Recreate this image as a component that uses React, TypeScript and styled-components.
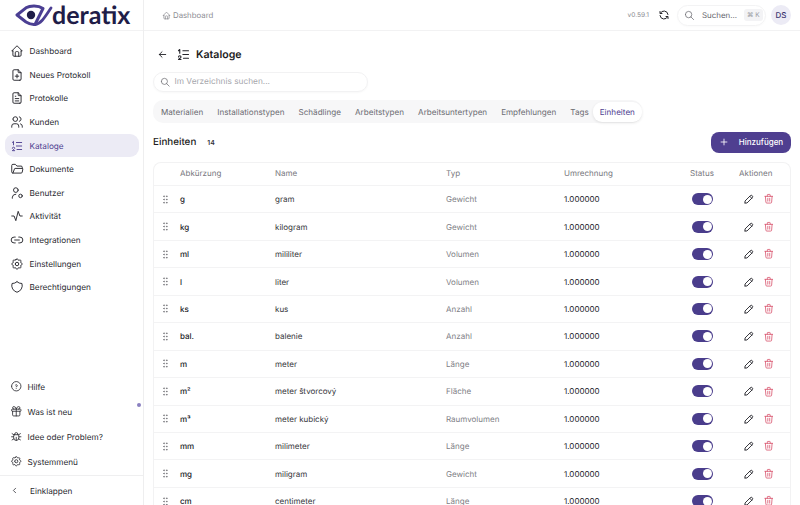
import React from "react";
import styled, { createGlobalStyle } from "styled-components";
import { Link2 } from "lucide-react";
import {
  TbHome, TbFilePlus, TbFileText, TbUsers, TbListNumbers, TbFolderOpen, TbActivity,
  TbSettings, TbShield, TbHelpCircle, TbGift, TbBug, TbChevronLeft, TbPencil, TbTrash,
  TbRefresh, TbSearch, TbArrowLeft, TbPlus, TbGripVertical,
} from "react-icons/tb";

const Global = createGlobalStyle`
  html, body { margin: 0; padding: 0; height: 505px; overflow: hidden; background: #fff; }
  * { box-sizing: border-box; }
  body { font-family: Inter, "Liberation Sans", sans-serif; color: #25252b; text-rendering: geometricPrecision; -webkit-font-smoothing: antialiased; }
`;

const Page = styled.div`display: flex; width: 800px; height: 505px; overflow: hidden;`;
const Sidebar = styled.aside`width: 144px; flex: none; border-right: 1px solid #eeeeef; display: flex; flex-direction: column; height: 505px;`;
const LogoBar = styled.div`height: 31px; display: flex; align-items: center; padding-left: 15px; border-bottom: 1px solid #f2f2f3;`;
const LogoText = styled.span`font-family: Lato, sans-serif; font-size: 25px; font-weight: 700; color: #1f1d48; margin-left: -1px; line-height: 31px;`;
const Nav = styled.nav`display: flex; flex-direction: column; padding: 8.5px 4px 0 5px; flex: 1;`;
const NavItem = styled.div<{ $active?: boolean }>`
  height: 23.6px; display: flex; align-items: center; gap: 5.5px; padding-left: 5px;
  border-radius: 9px; font-size: 8.2px; font-weight: 400;
  color: ${p => (p.$active ? "#4e4090" : "#2a2a30")};
  background: ${p => (p.$active ? "#ecebf5" : "transparent")};
  svg { width: 14px; height: 14px; flex: none; stroke-width: 1.6; color: ${p => (p.$active ? "#4e4090" : "#25252b")}; }
`;
const Lower = styled.div`position: relative; display: flex; flex-direction: column; padding: 0 4px 1px 5px;`;
const LowerItem = styled.div`
  height: 25px; display: flex; align-items: center; gap: 5.5px; padding-left: 4.5px; font-size: 8.2px; color: #2a2a30;
  svg { width: 12.5px; height: 12.5px; flex: none; stroke-width: 1.6; }
`;
const Dot = styled.span`position: absolute; right: 2px; top: 29px; width: 4px; height: 4px; border-radius: 50%; background: #8a80c0;`;
const Collapse = styled.div`
  height: 29px; margin-top: 1px; border-top: 1px solid #efeff0; display: flex; align-items: center; gap: 11px; padding-left: 10px; font-size: 8.2px; color: #2a2a30;
  margin-left: -5px; margin-right: -4px; padding-top: 1px;
  svg { width: 9px; height: 9px; stroke-width: 2; flex: none; }
`;

const Main = styled.main`flex: 1; min-width: 0; display: flex; flex-direction: column;`;
const TopBar = styled.header`height: 31px; flex: none; display: flex; align-items: center; padding: 0 9px 0 18px; border-bottom: 1px solid #f2f2f3;`;
const Crumb = styled.div`display: flex; align-items: center; gap: 2px; font-size: 7.8px; color: #8c8c92; flex: 1; svg { width: 9px; height: 9px; }`;
const Version = styled.span`font-size: 6.6px; color: #8c8c92; margin-right: 9px;`;
const SyncBtn = styled.span`display: flex; margin-right: 7px; svg { width: 12px; height: 12px; stroke-width: 2; color: #25252b; }`;
const GlobalSearch = styled.div`
  width: 89px; height: 21px; border-radius: 11px; border: 1px solid #f3f3f4; display: flex; align-items: center; padding-left: 6px; gap: 7px;
  font-size: 7.9px; color: #66666c; margin-right: 5px; box-shadow: 0 1px 2px rgba(0,0,0,.02); white-space: nowrap;
  svg { width: 11px; height: 11px; color: #66666c; stroke-width: 1.6; flex: none; }
`;
const Kbd = styled.span`background: #f3f3f5; border-radius: 3px; font-size: 6.5px; color: #9a9aa2; padding: 2px 3px; white-space: nowrap;`;
const Avatar = styled.div`width: 20px; height: 20px; border-radius: 50%; background: #ecebf5; color: #3c3670; font-size: 8px; font-weight: 500; display: flex; align-items: center; justify-content: center;`;

const Content = styled.div`flex: 1; padding: 0 9px 0 9px; min-height: 0;`;
const TitleRow = styled.div`display: flex; align-items: center; height: 20px; margin-top: 13px; padding-left: 4px; svg { flex: none; }`;
const BackIcon = styled(TbArrowLeft)`width: 11px; height: 11px; stroke-width: 2; color: #25252b; margin-right: 8px;`;
const ListIcon = styled(TbListNumbers)`width: 15px; height: 15px; stroke-width: 1.8; color: #25252b; margin-right: 5px;`;
const Title = styled.h1`margin: 0; font-size: 10.6px; font-weight: 600; color: #1c1c22;`;
const DirSearch = styled.div`
  width: 215px; height: 20px; margin-top: 8px; border-radius: 10px; border: 1px solid #f2f2f3; box-shadow: 0 1px 2px rgba(0,0,0,.03);
  display: flex; align-items: center; padding-left: 6px; gap: 4px; font-size: 8.3px; color: #a6a6ac;
  svg { width: 10.5px; height: 10.5px; color: #66666c; stroke-width: 1.6; }
`;
const TabBar = styled.div`display: inline-flex; align-items: center; margin-top: 8px; height: 23px; background: #f7f7f8; border-radius: 10px; padding-left: 1px; font-size: 8.1px;`;
const Tab = styled.div<{ $active?: boolean }>`
  height: 20px; display: flex; align-items: center; padding: 0 7px; white-space: nowrap; border-radius: 9px;
  margin-left: ${p => (p.$active ? "-3px" : "0")};
  color: ${p => (p.$active ? "#4e4090" : "#6c6c72")};
  background: ${p => (p.$active ? "#fff" : "transparent")};
  box-shadow: ${p => (p.$active ? "0 1px 3px rgba(0,0,0,.1)" : "none")};
`;
const SectionHead = styled.div`display: flex; align-items: center; height: 22px; margin-top: 8px;`;
const SectionTitle = styled.h2`margin: 0; font-size: 9.8px; font-weight: 500; color: #1c1c22;`;
const Count = styled.span`font-size: 6.8px; font-weight: 600; color: #33333a; margin-left: 11px; flex: 1;`;
const AddButton = styled.button`
  width: 80px; height: 21px; border: 0; border-radius: 8px; background: #4f3f90; color: #fff; font: 500 8px Inter, sans-serif;
  display: flex; align-items: center; justify-content: center; gap: 10px;
  svg { width: 10px; height: 10px; stroke-width: 2; }
`;
const Table = styled.div`margin-top: 9px; border: 1px solid #f2f2f3; border-bottom: 0; border-radius: 8px 8px 0 0; width: 638px;`;
const cols = "26px 95px 171px 118px 126px 49px 52px";
const HeadRow = styled.div`display: grid; grid-template-columns: ${cols}; height: 23px; padding-bottom: 2px; align-items: center; font-size: 8px; color: #77777d; border-bottom: 1px solid #f3f3f4;`;
const Row = styled.div`display: grid; grid-template-columns: ${cols}; height: 27.45px; align-items: center; font-size: 8px; color: #35353b; border-bottom: 1px solid #f3f3f4;`;
const Drag = styled.span`display: flex; padding-left: 6px; svg { width: 11px; height: 11px; color: #77777d; }`;
const Abbr = styled.span`color: #222228; font-weight: 500;`;
const Type = styled.span`color: #808086;`;
const Value = styled.span`color: #222228;`;
const Toggle = styled.span`display: flex; width: 21px; height: 12px; margin-left: 2px; border-radius: 6px; background: #4a3d8c; padding: 1.5px; justify-content: flex-end;`;
const Knob = styled.span`width: 9px; height: 9px; border-radius: 50%; background: #fff;`;
const Actions = styled.span`display: flex; align-items: center; gap: 8px; padding-left: 4px;`;
const Edit = styled(TbPencil)`width: 12px; height: 12px; stroke-width: 1.8; color: #25252b;`;
const Del = styled(TbTrash)`width: 11.5px; height: 11.5px; stroke-width: 1.7; color: #d9566f;`;

const UserDot = () => (
  <svg viewBox="0 0 24 24" fill="none" stroke="currentColor" strokeLinecap="round" strokeLinejoin="round">
    <circle cx="10" cy="7" r="4" />
    <path d="M4 21v-2a6 6 0 0 1 6-5" />
    <circle cx="18" cy="17" r="3" />
  </svg>
);

const navItems = [
  [TbHome, "Dashboard"], [TbFilePlus, "Neues Protokoll"], [TbFileText, "Protokolle"], [TbUsers, "Kunden"],
  [TbListNumbers, "Kataloge"], [TbFolderOpen, "Dokumente"], [UserDot, "Benutzer"], [TbActivity, "Aktivität"],
  [Link2, "Integrationen"], [TbSettings, "Einstellungen"], [TbShield, "Berechtigungen"],
] as const;
const lowerItems = [[TbHelpCircle, "Hilfe"], [TbGift, "Was ist neu"], [TbBug, "Idee oder Problem?"], [TbSettings, "Systemmenü"]] as const;
const tabs = ["Materialien", "Installationstypen", "Schädlinge", "Arbeitstypen", "Arbeitsuntertypen", "Empfehlungen", "Tags", "Einheiten"];
const rows = [
  ["g", "gram", "Gewicht"], ["kg", "kilogram", "Gewicht"], ["ml", "mililiter", "Volumen"], ["l", "liter", "Volumen"],
  ["ks", "kus", "Anzahl"], ["bal.", "balenie", "Anzahl"], ["m", "meter", "Länge"], ["m²", "meter štvorcový", "Fläche"],
  ["m³", "meter kubický", "Raumvolumen"], ["mm", "milimeter", "Länge"], ["mg", "miligram", "Gewicht"], ["cm", "centimeter", "Länge"],
];

const Logo = () => (
  <svg width="38" height="24" viewBox="0 0 38 24" fill="none" aria-label="deratix logo">
    <path d="M2 12 L11 4.8 C15 2.4 23 2 28 5.5 L20 21.5 C16 22 13.5 20.5 11 19 Z" stroke="#4b3f93" strokeWidth="3" strokeLinejoin="round" />
    <path d="M20 21.5 C26 21 30 14 36 5" stroke="#4b3f93" strokeWidth="2.8" strokeLinecap="round" />
    <circle cx="16" cy="12" r="4.2" fill="#1f1d48" />
  </svg>
);

export default function App() {
  return (
    <Page>
      <Global />
      <Sidebar>
        <LogoBar><Logo /><LogoText>deratix</LogoText></LogoBar>
        <Nav>
          {navItems.map(([Icon, label]) => (
            <NavItem key={label} $active={label === "Kataloge"}><Icon />{label}</NavItem>
          ))}
        </Nav>
        <Lower>
          {lowerItems.map(([Icon, label]) => (
            <LowerItem key={label}><Icon />{label}</LowerItem>
          ))}
          <Dot />
          <Collapse><TbChevronLeft />Einklappen</Collapse>
        </Lower>
      </Sidebar>
      <Main>
        <TopBar>
          <Crumb><TbHome />Dashboard</Crumb>
          <Version>v0.59.1</Version>
          <SyncBtn><TbRefresh /></SyncBtn>
          <GlobalSearch><TbSearch />Suchen...<Kbd>⌘ K</Kbd></GlobalSearch>
          <Avatar>DS</Avatar>
        </TopBar>
        <Content>
          <TitleRow><BackIcon /><ListIcon /><Title>Kataloge</Title></TitleRow>
          <DirSearch><TbSearch />Im Verzeichnis suchen...</DirSearch>
          <TabBar>{tabs.map(t => <Tab key={t} $active={t === "Einheiten"}>{t}</Tab>)}</TabBar>
          <SectionHead>
            <SectionTitle>Einheiten</SectionTitle>
            <Count>14</Count>
            <AddButton><TbPlus />Hinzufügen</AddButton>
          </SectionHead>
          <Table>
            <HeadRow><span /><span>Abkürzung</span><span>Name</span><span>Typ</span><span>Umrechnung</span><span>Status</span><span>Aktionen</span></HeadRow>
            {rows.map(r => (
              <Row key={r[0]}>
                <Drag><TbGripVertical /></Drag>
                <Abbr>{r[0]}</Abbr>
                <span>{r[1]}</span>
                <Type>{r[2]}</Type>
                <Value>1.000000</Value>
                <Toggle><Knob /></Toggle>
                <Actions><Edit /><Del /></Actions>
              </Row>
            ))}
          </Table>
        </Content>
      </Main>
    </Page>
  );
}
